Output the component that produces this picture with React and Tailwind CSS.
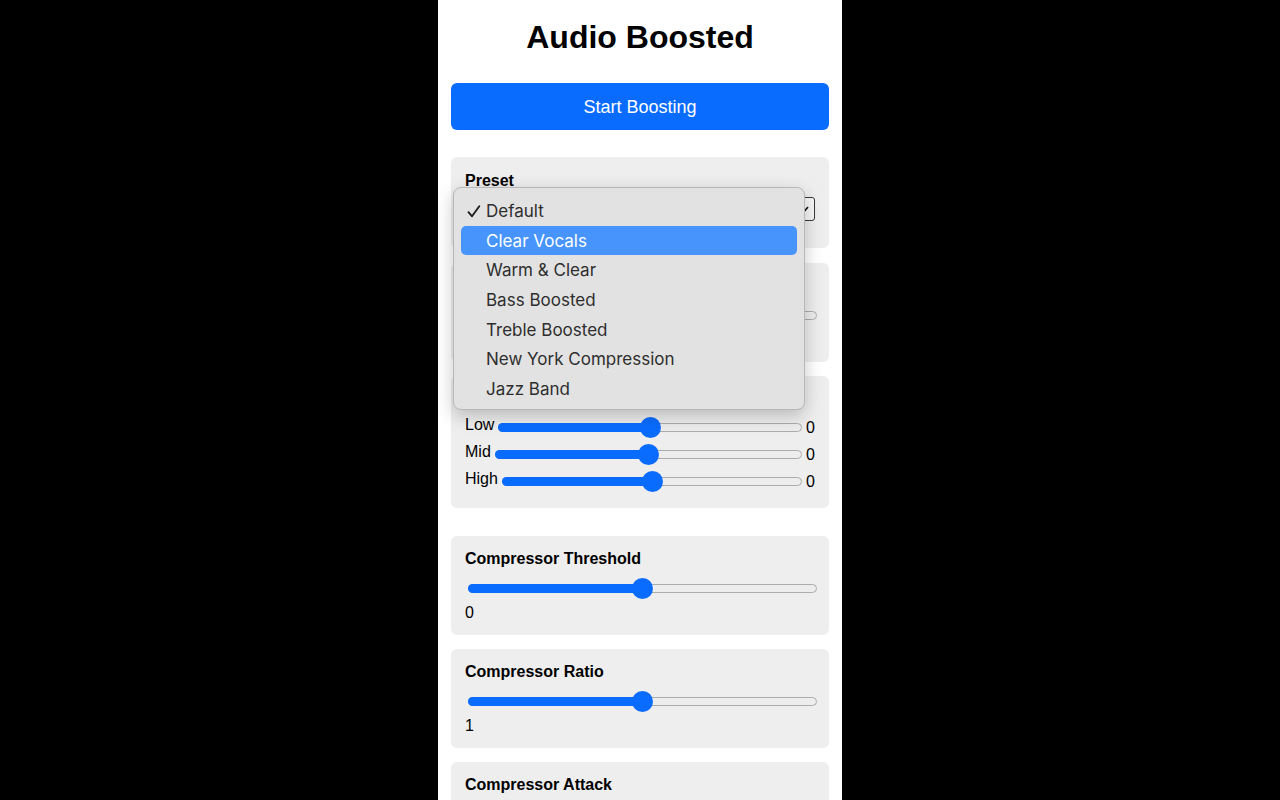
import React from "react";

function Slider({ pct, className = "" }) {
  const p = pct;
  return (
    <div className={"relative h-[21px] " + className}>
      <div className="absolute left-0 right-0 top-[6px] h-[9px] rounded-full bg-[#ededed] border border-[#acacac]" />
      <div
        className="absolute left-0 top-[6px] h-[9px] rounded-full bg-[#0a6cff]"
        style={{ width: `calc(10.5px + ${p} * (100% - 21px))` }}
      />
      <div
        className="absolute top-0 h-[21px] w-[21px] rounded-full bg-[#0a6cff]"
        style={{ left: `calc(${p} * (100% - 21px))` }}
      />
    </div>
  );
}

function SliderCard({ title, value, pct, className = "" }) {
  return (
    <div className={"rounded-[6px] bg-[#eeeeee] px-[14px] pt-[14px] pb-[13px] " + className}>
      <div className="text-[16px] font-bold leading-[18px] text-black">{title}</div>
      <Slider pct={pct} className="mt-[10px] ml-[3px] -mr-[2px]" />
      <div className="mt-[5px] text-[16px] leading-[18px] text-black">{value}</div>
    </div>
  );
}

function EqRow({ label }) {
  return (
    <div className="flex h-[27px] items-center">
      <span className="mb-[5px] text-[16px] leading-[18px] text-black">{label}</span>
      <Slider pct={0.5} className="mx-[4px] flex-1" />
      <span className="text-[16px] leading-[18px] text-black">0</span>
    </div>
  );
}

function Check() {
  return (
    <svg width="14" height="13" viewBox="0 0 14 13" className="absolute left-[6px] top-[9px]">
      <path d="M1.5 7.2 L5 11.3 L12.3 1.3" fill="none" stroke="#1f1f1f" strokeWidth="1.9" strokeLinecap="round" strokeLinejoin="round" />
    </svg>
  );
}

const options = [
  "Default",
  "Clear Vocals",
  "Warm & Clear",
  "Bass Boosted",
  "Treble Boosted",
  "New York Compression",
  "Jazz Band",
];

function Menu() {
  return (
    <div
      className="absolute left-[2px] top-[30px] z-10 w-[352px] rounded-[8px] border border-[#b8b8b8] bg-[#e2e2e2] px-[7px] pt-[8px] pb-[5px] shadow-[0_6px_18px_rgba(0,0,0,0.22)]"
      style={{ fontFamily: "Inter, 'Liberation Sans', sans-serif" }}
    >
      {options.map((o, i) => (
        <div
          key={o}
          className={
            "relative flex h-[29.67px] items-center rounded-[5px] pt-[2px] pl-[25px] text-[17px] " +
            (i === 1 ? "bg-[#4795fc] text-white" : "text-[#2e2e2e]")
          }
        >
          {i === 0 && <Check />}
          {o}
        </div>
      ))}
    </div>
  );
}

export default function App() {
  return (
    <div
      className="flex h-[800px] w-full justify-center overflow-hidden bg-black"
      style={{ fontFamily: "'Liberation Sans', Arial, sans-serif" }}
    >
      <div className="flex w-[404px] flex-col bg-white px-[13px] pt-[19px]">
        <h1 className="text-center text-[32px] font-bold leading-[37px] text-black">Audio Boosted</h1>

        <button className="mt-[27px] h-[47px] w-full shrink-0 rounded-[6px] bg-[#0a6cff] pt-[2px] text-[18px] text-white">
          Start Boosting
        </button>

        <div className="relative mt-[27px] shrink-0 rounded-[6px] bg-[#eeeeee] px-[14px] pt-[15px] pb-[27px]">
          <div className="text-[16px] font-bold leading-[18px] text-black">Preset</div>
          <div className="relative mt-[7px] flex h-[24px] items-center rounded-[3px] border border-[#3a3a3a] bg-[#f7f7f7] px-[6px] text-[14px]">
            <span>Default</span>
            <svg width="8" height="6" viewBox="0 0 8 6" className="absolute right-[5px] top-[8px]">
              <path d="M1 1 L4 4.5 L7 1" fill="none" stroke="#111" strokeWidth="1.6" />
            </svg>
          </div>
          <Menu />
        </div>

        <SliderCard title="Volume Boost" value="1" pct={0.1} className="mt-[15px] shrink-0" />

        <div className="mt-[14px] shrink-0 rounded-[6px] bg-[#eeeeee] px-[14px] pt-[14px] pb-[13px]">
          <div className="text-[16px] font-bold leading-[18px] text-black">Equalizer</div>
          <div className="mt-[6px] flex flex-col">
            <EqRow label="Low" />
            <EqRow label="Mid" />
            <EqRow label="High" />
          </div>
        </div>

        <SliderCard title="Compressor Threshold" value="0" pct={0.5} className="mt-[28px] shrink-0" />
        <SliderCard title="Compressor Ratio" value="1" pct={0.5} className="mt-[14px] shrink-0" />
        <SliderCard title="Compressor Attack" value="0" pct={0.5} className="mt-[14px] shrink-0" />
      </div>
    </div>
  );
}
